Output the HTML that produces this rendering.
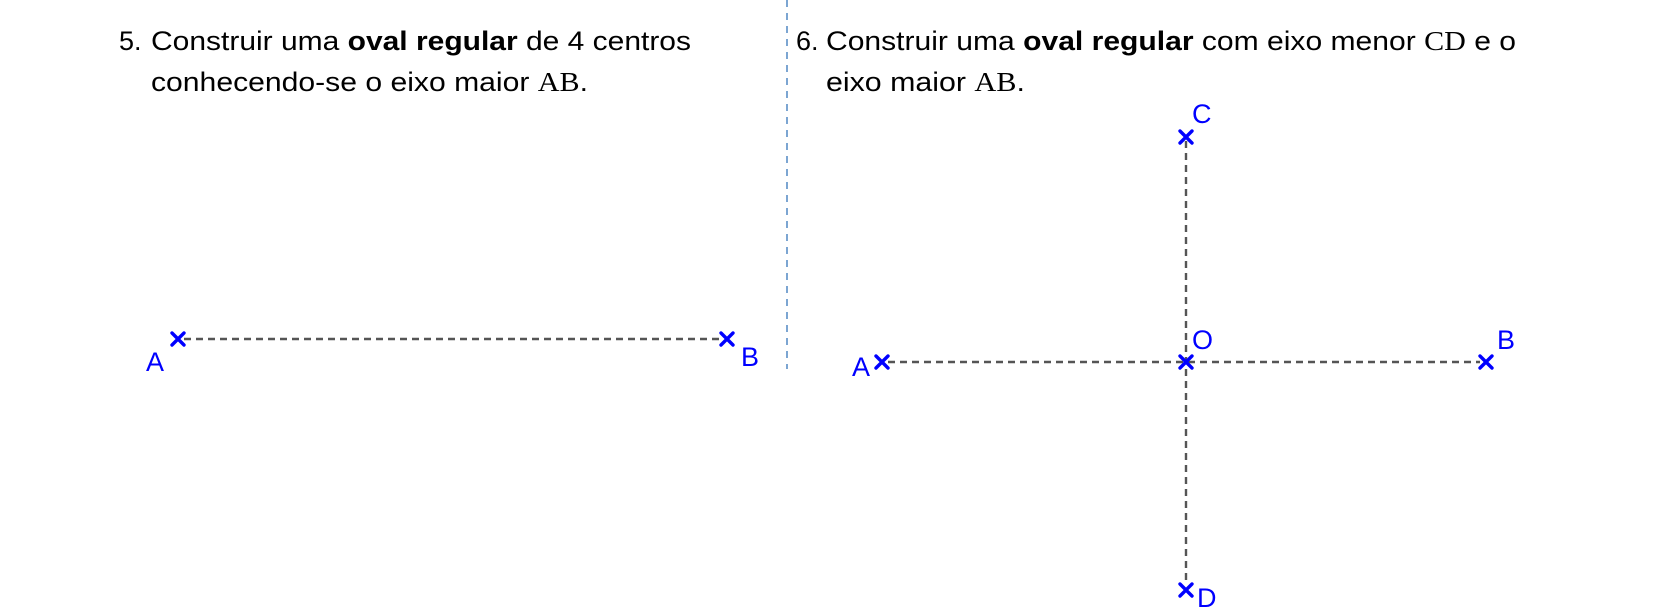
<!DOCTYPE html>
<html><head><meta charset="utf-8"><style>
html,body{margin:0;padding:0;background:#fff;}
svg{display:block;}
.t{font-family:"Liberation Sans",sans-serif;font-size:27px;fill:#000;}
.m{font-family:"Liberation Serif",serif;}
.l{font-family:"Liberation Sans",sans-serif;font-size:27px;fill:#0000ff;}
.x{stroke:#0000ff;stroke-width:3.4;stroke-linecap:round;}
.d{stroke:#555;stroke-width:2.4;stroke-dasharray:7 5;fill:none;}
</style></head><body>
<svg width="1654" height="615" viewBox="0 0 1654 615" xmlns="http://www.w3.org/2000/svg">
<line x1="787" y1="0" x2="787" y2="369" stroke="#5b8fc7" stroke-width="1.6" stroke-dasharray="7 6"/>
<text class="t" x="119" y="50">5.</text>
<text class="t" x="151" y="50" textLength="540" lengthAdjust="spacingAndGlyphs">Construir uma <tspan font-weight="bold">oval regular</tspan> de 4 centros</text>
<text class="t" x="151" y="91" textLength="437" lengthAdjust="spacingAndGlyphs">conhecendo-se o eixo maior <tspan class="m">AB</tspan>.</text>
<text class="t" x="796" y="50">6.</text>
<text class="t" x="826" y="50" textLength="690" lengthAdjust="spacingAndGlyphs">Construir uma <tspan font-weight="bold">oval regular</tspan> com eixo menor <tspan class="m">CD</tspan> e o</text>
<text class="t" x="826" y="91" textLength="199" lengthAdjust="spacingAndGlyphs">eixo maior <tspan class="m">AB</tspan>.</text>

<line class="d" x1="184" y1="339" x2="721" y2="339"/>
<line class="d" x1="888" y1="362" x2="1480" y2="362"/>
<line class="d" x1="1186" y1="141" x2="1186" y2="581"/>

<g class="x">
<path d="M172 333l12 12M184 333l-12 12"/>
<path d="M721 333l12 12M733 333l-12 12"/>
<path d="M876 356l12 12M888 356l-12 12"/>
<path d="M1180 356l12 12M1192 356l-12 12"/>
<path d="M1480 356l12 12M1492 356l-12 12"/>
<path d="M1180 131l12 12M1192 131l-12 12"/>
<path d="M1180 584l12 12M1192 584l-12 12"/>
</g>
<text class="l" x="146" y="371">A</text>
<text class="l" x="741" y="366">B</text>
<text class="l" x="852" y="376">A</text>
<text class="l" x="1192" y="349">O</text>
<text class="l" x="1497" y="349">B</text>
<text class="l" x="1192" y="123">C</text>
<text class="l" x="1197" y="607">D</text>
</svg>
</body></html>
